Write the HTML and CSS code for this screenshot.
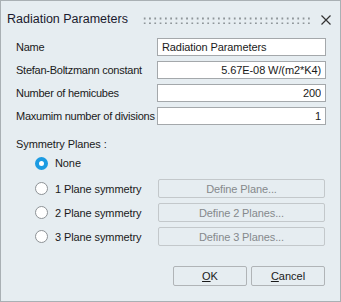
FILE: index.html
```html
<!DOCTYPE html>
<html lang="en">
	<head>
		<meta charset="UTF-8" />
		<title>Radiation Parameters</title>
		<link rel="stylesheet" href="styles.css">
	</head>
	<body>
		<div class="dialog">
			<div class="titlebar">
				<span class="title">Radiation Parameters</span>
				<div class="grip"></div>
				<button class="close-btn" aria-label="Close">
					<svg width="10" height="10" viewBox="0 0 10 10">
						<path d="M0.5 0.5 L9.5 9.5 M9.5 0.5 L0.5 9.5" stroke="#333" stroke-width="1.2" fill="none" />
					</svg>
				</button>
			</div>

			<div class="fields">
				<label>Name</label>
				<input class="field" type="text" value="Radiation Parameters" />
				<label>Stefan-Boltzmann constant</label>
				<input class="field num" type="text" value="5.67E-08 W/(m2*K4)" />
				<label>Number of hemicubes</label>
				<input class="field num" type="text" value="200" />
				<label>Maxumim number of divisions</label>
				<input class="field num" type="text" value="1" />
			</div>

			<div class="section-label">Symmetry Planes :</div>

			<div class="symmetry">
				<label class="radio-row">
					<span class="radio checked"></span>
					<span>None</span>
				</label>
				<div></div>
				<label class="radio-row">
					<span class="radio"></span>
					<span>1 Plane symmetry</span>
				</label>
				<button class="define-btn" disabled>Define Plane...</button>
				<label class="radio-row">
					<span class="radio"></span>
					<span>2 Plane symmetry</span>
				</label>
				<button class="define-btn" disabled>Define 2 Planes...</button>
				<label class="radio-row">
					<span class="radio"></span>
					<span>3 Plane symmetry</span>
				</label>
				<button class="define-btn" disabled>Define 3 Planes...</button>
			</div>

			<div class="actions">
				<button class="action-btn"><u>O</u>K</button>
				<button class="action-btn"><u>C</u>ancel</button>
			</div>
		</div>
	</body>
</html>
```

FILE: styles.css
```css
* {
	margin: 0;
	padding: 0;
	box-sizing: border-box;
}

body {
	font-family: 'Liberation Sans', Arial, sans-serif;
	font-size: 11px;
	letter-spacing: -0.1px;
	color: #1a1a1a;
	background: #e6edf1;
}

.dialog {
	width: 341px;
	height: 302px;
	border: 1px solid #a9b0b4;
	background: #e6edf1;
	display: flex;
	flex-direction: column;
}

.titlebar {
	height: 37px;
	display: flex;
	align-items: center;
	padding: 0 9px 0 6px;
}

.title {
	font-size: 12.5px;
	letter-spacing: 0;
	color: #1a1a2e;
	margin-top: -1px;
}

.grip {
	flex: 1;
	height: 8px;
	margin: 0 10px 0 14px;
	background-image: radial-gradient(
		circle,
		#8f969a 0.9px,
		transparent 1.3px
	);
	background-size: 5.3px 5px;
}

.close-btn {
	width: 10px;
	height: 10px;
	border: none;
	background: none;
	display: flex;
}

.fields {
	display: grid;
	grid-template-columns: 141px 169px;
	grid-auto-rows: 18px;
	row-gap: 5px;
	padding-left: 15px;
	align-items: center;
}

.fields label {
	white-space: nowrap;
	letter-spacing: -0.25px;
}

.field {
	height: 18px;
	border: 1px solid #a4a8ab;
	background: white;
	font-family: inherit;
	font-size: 11px;
	letter-spacing: -0.1px;
	color: #1a1a1a;
	padding: 0 4px;
	outline: none;
}

.num {
	text-align: right;
}

.section-label {
	margin: 12px 0 0 15px;
	line-height: 14px;
}

.symmetry {
	display: grid;
	grid-template-columns: 123px 167px;
	grid-auto-rows: 19px;
	row-gap: 5px;
	padding-left: 34px;
	margin-top: 4px;
	align-items: center;
}

.symmetry > :first-child {
	margin-top: -3px;
}

.radio-row {
	display: flex;
	align-items: center;
	gap: 7px;
}

.radio {
	width: 13px;
	height: 13px;
	border-radius: 50%;
	border: 1px solid #8d9296;
	background: white;
}

.radio.checked {
	border: 4px solid #1c9be2;
	background: white;
}

.define-btn {
	height: 19px;
	border: 1px solid #c3c8cb;
	border-radius: 2px;
	background: #e6edf1;
	font-family: inherit;
	font-size: 11px;
	letter-spacing: -0.1px;
	color: #85898c;
}

.actions {
	display: flex;
	justify-content: flex-end;
	gap: 4px;
	margin-top: auto;
	padding: 0 15px 15px 0;
}

.action-btn {
	width: 74px;
	height: 20px;
	border: 1px solid #b0b4b7;
	border-radius: 2px;
	background: #e6edf1;
	font-family: inherit;
	font-size: 11px;
	color: #1a1a1a;
}
```
